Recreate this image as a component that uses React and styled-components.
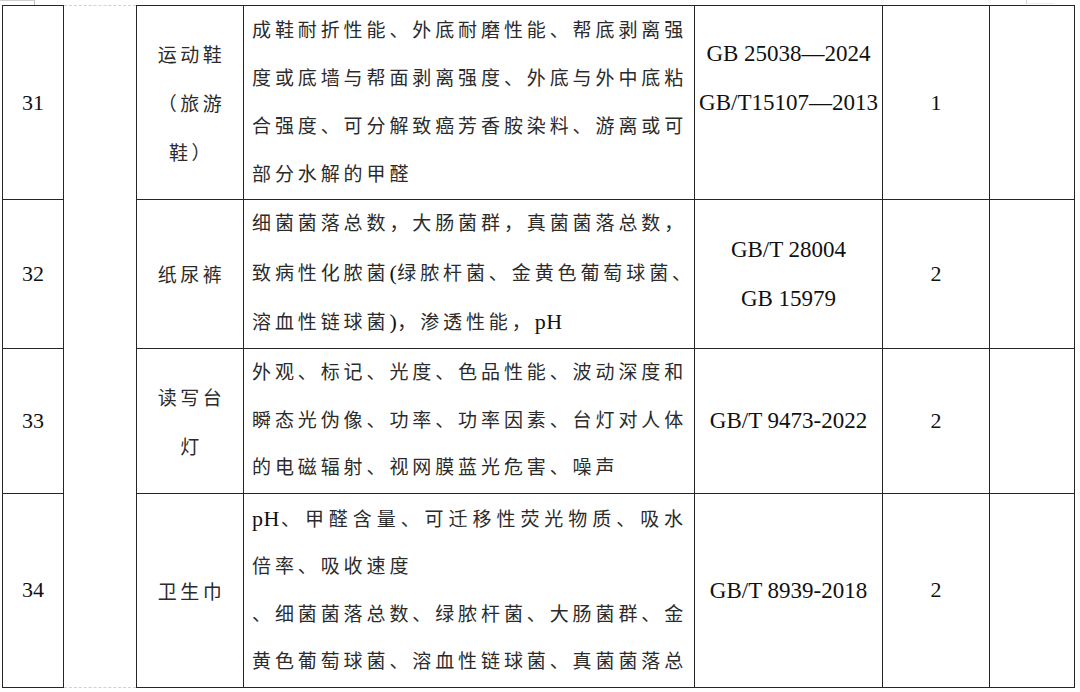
import React from "react";
import styled, { createGlobalStyle } from "styled-components";

const GlobalStyle = createGlobalStyle`
  html, body {
    margin: 0;
    padding: 0;
    background: #fff;
  }
  body {
    font-family: "Liberation Serif", "Noto Sans CJK SC", serif;
    color: #111;
  }
`;

const rows = [
  {
    no: "31",
    name: ["运动鞋", "（旅游", "鞋）"],
    items: [
      "成鞋耐折性能、外底耐磨性能、帮底剥离强",
      "度或底墙与帮面剥离强度、外底与外中底粘",
      "合强度、可分解致癌芳香胺染料、游离或可",
      "部分水解的甲醛\n",
    ],
    pitch: 48,
    standards: ["GB 25038—2024", "GB/T15107—2013", ""],
    count: "1",
    height: 194,
  },
  {
    no: "32",
    name: ["纸尿裤"],
    items: [
      "细菌菌落总数，大肠菌群，真菌菌落总数，",
      "致病性化脓菌(绿脓杆菌、金黄色葡萄球菌、",
      "溶血性链球菌)，渗透性能，pH\n",
    ],
    pitch: 48.5,
    standards: ["GB/T 28004", "GB 15979"],
    count: "2",
    height: 147,
  },
  {
    no: "33",
    name: ["读写台", "灯"],
    items: [
      "外观、标记、光度、色品性能、波动深度和",
      "瞬态光伪像、功率、功率因素、台灯对人体",
      "的电磁辐射、视网膜蓝光危害、噪声\n",
    ],
    pitch: 47.5,
    standards: ["GB/T 9473-2022"],
    count: "2",
    height: 145,
  },
  {
    no: "34",
    name: ["卫生巾"],
    items: [
      "pH、甲醛含量、可迁移性荧光物质、吸水",
      "倍率、吸收速度\n",
      "、细菌菌落总数、绿脓杆菌、大肠菌群、金",
      "黄色葡萄球菌、溶血性链球菌、真菌菌落总",
    ],
    pitch: 47.5,
    standards: ["GB/T 8939-2018"],
    count: "2",
    height: 194,
  },
];

// latin runs (pH, brackets) sit tight, without the CJK letter spacing
function renderLine(text) {
  return text.split(/([A-Za-z()]+)/).map((part, i) =>
    /^[A-Za-z()]+$/.test(part) ? <Latin key={i}>{part}</Latin> : part
  );
}

export default function App() {
  return (
    <Page>
      <GlobalStyle />
      <EdgeStrip>
        <LeftCorner />
        <EdgeSpacer />
        <RightCorner />
      </EdgeStrip>
      <Sheet>
        <colgroup>
          <col style={{ width: 61 }} />
          <col style={{ width: 73 }} />
          <col style={{ width: 107 }} />
          <col style={{ width: 451 }} />
          <col style={{ width: 188 }} />
          <col style={{ width: 107 }} />
          <col style={{ width: 85 }} />
        </colgroup>
        <tbody>
          {rows.map((row, index) => (
            <Row key={row.no} $height={row.height}>
              <NumberCell>{row.no}</NumberCell>
              {index === 0 ? <MergedCell rowSpan={rows.length} /> : null}
              <NameCell>
                {row.name.map((line, i) => (
                  <Line key={i}>{line}</Line>
                ))}
              </NameCell>
              <ItemsCell $pitch={row.pitch}>
                {row.items.map((line, i) => {
                  const last = line.endsWith("\n");
                  return (
                    <ItemLine key={i} $justify={!last}>
                      {renderLine(line.trim())}
                    </ItemLine>
                  );
                })}
              </ItemsCell>
              <StandardCell>
                {row.standards.map((line, i) => (
                  <Line key={i}>{line || "\u00a0"}</Line>
                ))}
              </StandardCell>
              <NumberCell>{row.count}</NumberCell>
              <Cell />
            </Row>
          ))}
        </tbody>
      </Sheet>
    </Page>
  );
}

const Page = styled.div`
  width: 1080px;
  height: 692px;
  padding-left: 2px;
  box-sizing: border-box;
  overflow: hidden;
`;

const EdgeStrip = styled.div`
  display: flex;
  height: 5px;
  margin-left: -2px;
`;

const LeftCorner = styled.div`
  width: 34px;
  height: 4px;
  border-top: 1px solid #cfcfcf;
  border-right: 1px solid #bdbdbd;
`;

const EdgeSpacer = styled.div`
  flex: 1;
`;

const RightCorner = styled.div`
  width: 27px;
  height: 3px;
  margin-right: 26px;
  border-left: 1px solid #d4d4d4;
  border-bottom: 1px solid #ececec;
`;

const Sheet = styled.table`
  width: 1072px;
  border-collapse: collapse;
  table-layout: fixed;
`;

const Row = styled.tr`
  height: ${(p) => p.$height}px;
`;

const Cell = styled.td`
  border: 1.5px solid #262626;
  padding: 0;
  vertical-align: middle;
  text-align: center;
`;

const NumberCell = styled(Cell)`
  font-size: 22px;
  color: #111;
`;

const MergedCell = styled(Cell)`
  border-top: 1px dashed #d2d2d2;
  border-bottom: 1px dashed #d2d2d2;
`;

const NameCell = styled(Cell)`
  font-family: "Noto Sans CJK SC", sans-serif;
  font-size: 19px;
  line-height: 49px;
  letter-spacing: 3.5px;
  padding-left: 3px;
  color: #2b2b2b;
`;

const ItemsCell = styled(Cell)`
  text-align: left;
  padding: 0 7px 0 8px;
  font-size: 19px;
  line-height: ${(p) => p.$pitch}px;
  letter-spacing: 3.9px;
  color: #2b2b2b;
`;

const Latin = styled.span`
  font-family: "Liberation Serif", serif;
  font-size: 22px;
  letter-spacing: 0.5px;
  color: #111;
`;

const StandardCell = styled(Cell)`
  font-size: 23px;
  line-height: 49px;
  color: #111;
`;

const Line = styled.span`
  display: block;
  white-space: nowrap;
`;

const ItemLine = styled(Line)`
  text-align: left;
  text-align-last: ${(p) => (p.$justify ? "justify" : "left")};
  text-justify: inter-character;
`;
